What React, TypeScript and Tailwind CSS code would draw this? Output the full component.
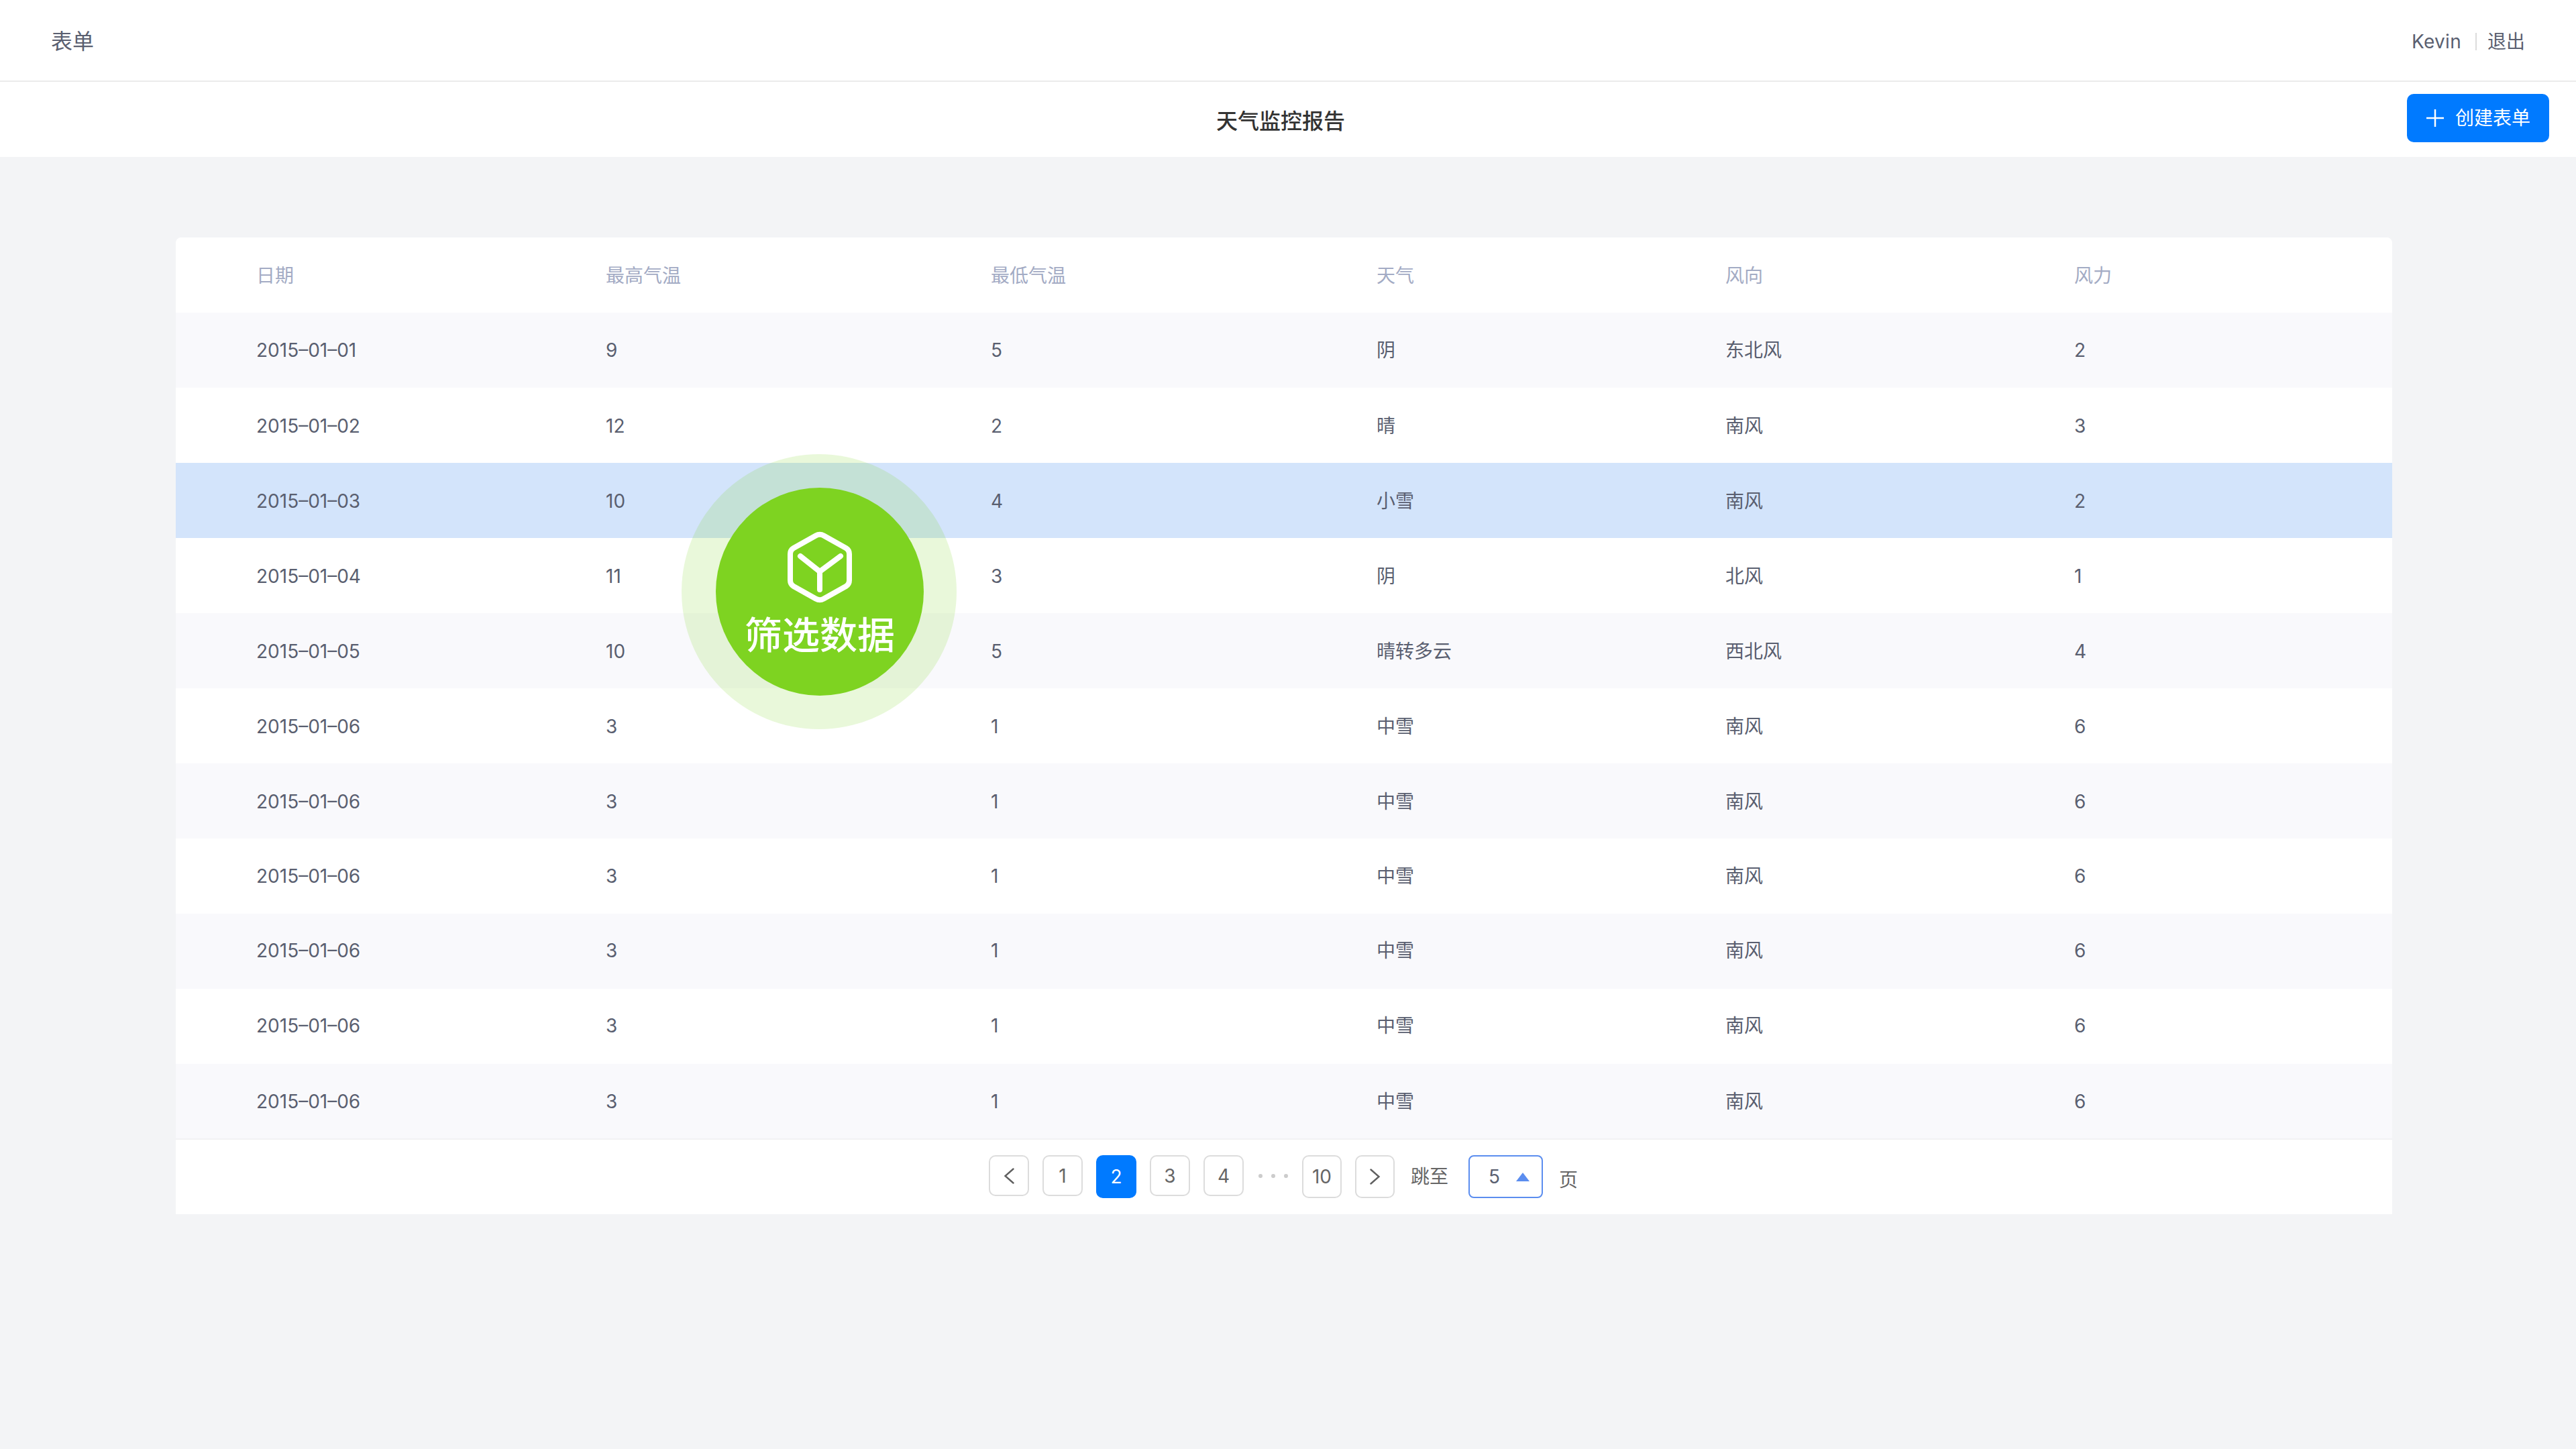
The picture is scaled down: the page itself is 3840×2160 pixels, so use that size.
const rows = [
  ["2015–01–01", "9", "5", "阴", "东北风", "2"],
  ["2015–01–02", "12", "2", "晴", "南风", "3"],
  ["2015–01–03", "10", "4", "小雪", "南风", "2"],
  ["2015–01–04", "11", "3", "阴", "北风", "1"],
  ["2015–01–05", "10", "5", "晴转多云", "西北风", "4"],
  ["2015–01–06", "3", "1", "中雪", "南风", "6"],
  ["2015–01–06", "3", "1", "中雪", "南风", "6"],
  ["2015–01–06", "3", "1", "中雪", "南风", "6"],
  ["2015–01–06", "3", "1", "中雪", "南风", "6"],
  ["2015–01–06", "3", "1", "中雪", "南风", "6"],
  ["2015–01–06", "3", "1", "中雪", "南风", "6"],
]

const columns = ["日期", "最高气温", "最低气温", "天气", "风向", "风力"]
const rowGrid = "grid grid-cols-[521px_574px_575px_520px_520px_1fr] items-center pl-[120px] text-[28px]"

function rowColor(index: number) {
  if (index === 2) return "bg-[#d3e4fb]"
  if (index === 0 || index === 4 || index === 6 || index === 8 || index === 10) return "bg-[#f9f9fc]"
  return "bg-white"
}

function rowHeight(index: number) {
  if (index === 10) return "h-[111px]"
  if (index === 8 || index === 9) return "h-[112px] pb-[2px]"
  if (index === 0 || index === 7) return "h-[112px]"
  return "h-[112px] pt-[2px]"
}

function PageButton({ label, active, size }: { label: string; active?: boolean; size: string }) {
  return (
    <button
      className={`flex items-center justify-center rounded-[10px] border-2 text-[28px] ${size} ${
        active ? "border-[#007aff] bg-[#007aff] text-white" : "border-[#dcdcdc] bg-white text-[#666666]"
      }`}
    >
      {label}
    </button>
  )
}

function Chevron({ flip }: { flip?: boolean }) {
  return (
    <svg width="16" height="24" viewBox="0 0 16 24" fill="none" className={flip ? "rotate-180" : ""}>
      <path d="M14.5 1.5 L2.5 12 L14.5 22.5" stroke="#5f5f5f" strokeWidth="2.4" strokeLinecap="round" />
    </svg>
  )
}

function CubeBadge() {
  return (
    <div className="absolute left-[754px] top-[323px] flex h-[410px] w-[410px] items-center justify-center rounded-full bg-[#7ed321]/[0.17]">
      <div className="ml-[2px] flex h-[310px] w-[310px] flex-col items-center rounded-full bg-[#7ed321] pt-[65px]">
        <svg width="96" height="107" viewBox="0 0 96 107" fill="none" stroke="white" strokeWidth="8" strokeLinecap="round" strokeLinejoin="round">
          <path d="M42 6.5 Q48 3 54 6.5 L87 25 Q92 28 92 34 L92 73 Q92 79 87 82 L54 100.5 Q48 104 42 100.5 L9 82 Q4 79 4 73 L4 34 Q4 28 9 25 Z" />
          <path d="M19 37 L48 60 L79 37 M48 60 L48 87" />
        </svg>
        <span className="mt-[12px] text-[56px] leading-[72px] font-medium text-white">筛选数据</span>
      </div>
    </div>
  )
}

export default function App() {
  return (
    <div className="min-h-[2160px] bg-[#f3f4f6] font-['Inter','Noto_Sans_CJK_SC',sans-serif] text-[#5a5f70]">
      <header className="flex h-[122px] items-center justify-between border-b-2 border-[#ebebeb] bg-white pl-[76px] pr-[76px]">
        <span className="mt-[3px] text-[32px]">表单</span>
        <div className="mt-[3px] flex items-center text-[28px]">
          <span className="tracking-[0.3px]">Kevin</span>
          <span className="ml-[21px] mr-[16px] h-[26px] w-[2px] bg-[#dcdcdc]" />
          <span>退出</span>
        </div>
      </header>

      <div className="flex h-[112px] items-center justify-between bg-white pl-[1813px] pr-[40px]">
        <h1 className="mt-[5px] text-[32px] font-medium text-[#333333]">天气监控报告</h1>
        <button className="-mt-[4px] flex h-[72px] w-[212px] items-center justify-center gap-[16px] rounded-[10px] bg-[#007aff] text-[28px] text-white">
          <svg width="28" height="28" viewBox="0 0 28 28" stroke="white" strokeWidth="2.5">
            <path d="M1 14 H27 M14 1 V27" />
          </svg>
          创建表单
        </button>
      </div>

      <main className="pt-[120px] pl-[262px]">
        <div className="relative w-[3304px] overflow-hidden rounded-t-[8px] bg-white">
          <div className={`${rowGrid} h-[112px] pt-[2px] text-[#a3abc4]`}>
            {columns.map((name) => (
              <span key={name}>{name}</span>
            ))}
          </div>

          {rows.map((row, index) => (
            <div key={index} className={`${rowGrid} ${rowHeight(index)} ${rowColor(index)}`}>
              {row.map((cell, cellIndex) => (
                <span key={cellIndex}>{cell}</span>
              ))}
            </div>
          ))}

          <div className="flex h-[113px] items-start border-t-2 border-[#f2f2f4] pl-[1212px] pt-[23px] text-[#666666]">
            <button className="flex h-[61px] w-[60px] items-center justify-center rounded-[10px] border-2 border-[#dcdcdc]">
              <Chevron />
            </button>
            <div className="ml-[20px] flex items-start gap-[20px]">
              <PageButton label="1" size="h-[61px] w-[60px]" />
              <PageButton label="2" active size="h-[64px] w-[60px]" />
              <PageButton label="3" size="h-[61px] w-[60px]" />
              <PageButton label="4" size="h-[61px] w-[60px]" />
            </div>
            <div className="ml-[22px] mr-[21px] mt-[28px] flex w-[44px] justify-between">
              <span className="h-[6px] w-[6px] rounded-full bg-[#cccccc]" />
              <span className="h-[6px] w-[6px] rounded-full bg-[#cccccc]" />
              <span className="h-[6px] w-[6px] rounded-full bg-[#cccccc]" />
            </div>
            <PageButton label="10" size="h-[64px] w-[59px]" />
            <button className="ml-[20px] flex h-[64px] w-[59px] items-center justify-center rounded-[10px] border-2 border-[#dcdcdc]">
              <Chevron flip />
            </button>
            <span className="ml-[24px] mt-[11px] text-[28px]">跳至</span>
            <div className="ml-[30px] flex h-[64px] w-[111px] items-center rounded-[8px] border-2 border-[#5b8def] pl-[28px] text-[28px] text-[#5a5f70]">
              5
              <span className="ml-[24px] h-0 w-0 border-x-[10px] border-b-[13px] border-x-transparent border-b-[#5b8def]" />
            </div>
            <span className="ml-[24px] mt-[16px] text-[28px]">页</span>
          </div>

          <CubeBadge />
        </div>
      </main>
    </div>
  )
}
